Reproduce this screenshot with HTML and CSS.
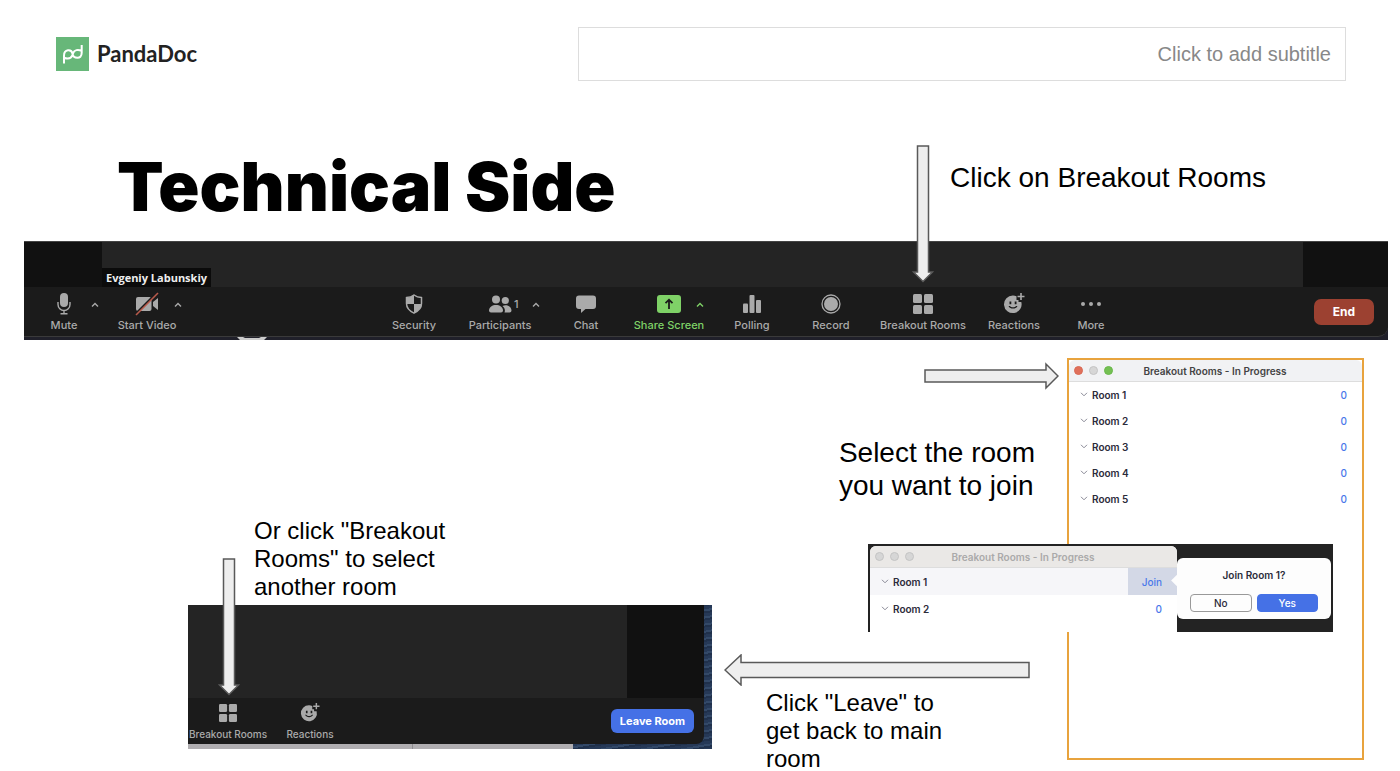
FILE: index.html
```html
<!DOCTYPE html>
<html lang="en">
<head>
    <meta charset="UTF-8">
    <meta name="viewport" content="width=device-width, initial-scale=1.0">
    <title>Technical Side</title>
    <link rel="stylesheet" href="styles.css">
</head>
<body>
    <!-- Shared icons -->
    <svg class="sprite" aria-hidden="true">
        <symbol id="grid" viewBox="0 0 20 20">
            <rect x="0" y="0" width="9" height="9" rx="1.5"/><rect x="11" y="0" width="9" height="9" rx="1.5"/>
            <rect x="0" y="11" width="9" height="9" rx="1.5"/><rect x="11" y="11" width="9" height="9" rx="1.5"/>
        </symbol>
        <symbol id="smile" viewBox="0 0 22 22">
            <path fill-rule="evenodd" d="M10 2.500a8.800 8.800 0 1 0 8.300 6.500h-2.800v-2h-2v-3.700a8.800 8.800 0 0 0-3.500-.8zM6.500 8.500h1.800v2.800h-1.800zM11.700 8.500h1.800v2.800h-1.800zM5.500 12.900h1.300c1.400 1.900 5 1.900 6.400 0h1.300c-1.500 3.600-7.500 3.600-9 0z"/>
            <path d="M17.200 0h1.600v2.700h2.700v1.600h-2.700v2.700h-1.600v-2.700h-2.700v-1.600h2.700z"/>
        </symbol>
        <symbol id="up" viewBox="0 0 8 5"><path d="M1 4.500l3-3 3 3" fill="none" stroke="currentColor" stroke-width="1.400"/></symbol>
        <symbol id="down" viewBox="0 0 8 5"><path d="M1 .8l3 3 3-3" fill="none" stroke="currentColor" stroke-width="1"/></symbol>
    </svg>

    <main class="slide">
        <header class="header">
            <div class="logo">
                <svg class="logo-mark" viewBox="0 0 33 34" aria-hidden="true">
                    <rect width="33" height="34" fill="#67b779"/>
                    <path d="M8 26.500v-7.700c0-7 7.500-6.800 8.500-2.200.7 5 9.200 6.500 9.200-.8V8M8 20.800c4 1.500 7.200.6 8.500-2.600l.6-1.900c1.200-3.600 5-4 8.400-2.500" fill="none" stroke="#fff" stroke-width="2"/>
                </svg>
                <span>PandaDoc</span>
            </div>
            <input class="subtitle" type="text" placeholder="Click to add subtitle" aria-label="Subtitle">
        </header>

        <div class="title-row">
            <h1>Technical Side</h1>
            <p class="note note-large">Click on Breakout Rooms</p>
        </div>

        <!-- Zoom toolbar -->
        <section class="meeting">
            <div class="video">
                <div class="video-edge"></div>
                <div class="video-main"><span class="name">Evgeniy Labunskiy</span></div>
                <div class="video-edge video-edge-right"></div>
            </div>
            <div class="toolbar">
                <div class="tools-left">
                    <button class="tool">
                        <span class="icon"><svg width="14" height="22" viewBox="0 0 14 22"><rect x="3" y="0" width="8" height="14" rx="4"/><path d="M1 9v2.500a6 6 0 0 0 12 0V9M7 17.500v3M3.500 20.700h7" fill="none" stroke="currentColor" stroke-width="1.400"/></svg></span>
                        Mute
                        <svg class="caret"><use href="#up"/></svg>
                    </button>
                    <button class="tool">
                        <span class="icon"><svg width="24" height="24" viewBox="0 0 24 24"><rect x="1" y="5" width="15.500" height="14" rx="2"/><path d="M18 10l5-4v12l-5-4z"/><path d="M.5 22L21.500 1" stroke="#1b1b1b" stroke-width="2"/><path d="M1 23L23 1" stroke="#b85a4b" stroke-width="1.600"/></svg></span>
                        Start Video
                        <svg class="caret"><use href="#up"/></svg>
                    </button>
                </div>
                <div class="tools">
                    <button class="tool">
                        <span class="icon"><svg width="18" height="20" viewBox="0 0 18 20"><path d="M9 1c2.300 1.700 4.600 2.400 7.500 2.600v6c0 4.500-3 7.500-7.500 9.500-4.500-2-7.500-5-7.500-9.500v-6C4.400 3.400 6.700 2.700 9 1z" fill="none" stroke="currentColor" stroke-width="1.500"/><path d="M9 1v9H1.500V4C4 3.500 7 2.700 9 1zM9 10h7.500c0 4-3 7-7.500 9z"/></svg></span>
                        Security
                    </button>
                    <button class="tool">
                        <span class="icon"><svg width="24" height="20" viewBox="0 0 24 20"><circle cx="8" cy="5.500" r="4"/><path d="M3 18.500a2 2 0 0 1-2-2c0-7.500 14-7.500 14 0a2 2 0 0 1-2 2z"/><circle cx="17.300" cy="6.500" r="3.600"/><path d="M14.500 12c4-2 9 .3 9 4.500a2 2 0 0 1-2 2h-5c1-2.500 0-5-2-6.500z"/></svg></span>
                        Participants
                        <span class="count">1</span>
                        <svg class="caret caret-wide"><use href="#up"/></svg>
                    </button>
                    <button class="tool">
                        <span class="icon"><svg width="20" height="20" viewBox="0 0 20 20"><path d="M3 1.500h14a3 3 0 0 1 3 3V12a3 3 0 0 1-3 3H9.500L5 19v-4H3a3 3 0 0 1-3-3V4.500a3 3 0 0 1 3-3z"/></svg></span>
                        Chat
                    </button>
                    <button class="tool share">
                        <span class="icon"><svg width="24" height="18" viewBox="0 0 24 18"><rect width="24" height="18" rx="3"/><path d="M12 14V5M8.500 8.200L12 4.700l3.500 3.500" fill="none" stroke="#1b1b1b" stroke-width="1.800"/></svg></span>
                        Share Screen
                        <svg class="caret"><use href="#up"/></svg>
                    </button>
                    <button class="tool">
                        <span class="icon"><svg width="18" height="20" viewBox="0 0 18 20"><rect x="0" y="9.500" width="5" height="9.500" rx="1"/><rect x="6.500" y="1" width="5" height="18" rx="1"/><rect x="13" y="6" width="5" height="13" rx="1"/></svg></span>
                        Polling
                    </button>
                    <button class="tool">
                        <span class="icon"><svg width="20" height="20" viewBox="0 0 20 20"><circle cx="10" cy="10" r="9" fill="none" stroke="currentColor" stroke-width="1.300"/><circle cx="10" cy="10" r="7"/></svg></span>
                        Record
                    </button>
                    <button class="tool">
                        <span class="icon"><svg width="20" height="20"><use href="#grid"/></svg></span>
                        Breakout Rooms
                        <svg class="arrow-down arrow-toolbar" width="22" height="138" viewBox="0 0 22 138"><path d="M5.500 1h11v126h4l-9.500 9.500L1.500 127h4z"/></svg>
                    </button>
                    <button class="tool">
                        <span class="icon"><svg width="22" height="22"><use href="#smile"/></svg></span>
                        Reactions
                    </button>
                    <button class="tool">
                        <span class="icon"><svg width="20" height="20" viewBox="0 0 20 20"><circle cx="2" cy="10" r="2"/><circle cx="10" cy="10" r="2"/><circle cx="18" cy="10" r="2"/></svg></span>
                        More
                    </button>
                </div>
                <button class="end">End</button>
            </div>
            <svg class="peek" viewBox="0 0 30 3" aria-hidden="true"><path d="M0 0h6l2 1h14l2-1h6l-3 3H3z"/></svg>
        </section>

        <div class="lower">
            <div class="col-left">
                <p class="note">Or click "Breakout<br>Rooms" to select<br>another room</p>
                <section class="leave">
                    <div class="leave-window">
                        <div class="leave-video"></div>
                        <div class="leave-bar">
                            <button class="tool">
                                <span class="icon"><svg width="18" height="18"><use href="#grid"/></svg></span>
                                Breakout Rooms
                            </button>
                            <button class="tool">
                                <span class="icon"><svg width="20" height="20"><use href="#smile"/></svg></span>
                                Reactions
                            </button>
                            <button class="leave-button">Leave Room</button>
                        </div>
                    </div>
                    <svg class="arrow-down arrow-leave" width="22" height="138" viewBox="0 0 22 138"><path d="M5.500 1h11v126h4l-9.500 9.500L1.500 127h4z"/></svg>
                </section>
            </div>

            <div class="col-middle">
                <svg class="arrow" width="136" height="28" viewBox="0 0 136 28"><path d="M2 8h121V2l12 12-12 12v-6H2z"/></svg>
                <p class="note note-large note-select">Select the room<br>you want to join</p>
                <svg class="arrow arrow-left" width="306" height="32" viewBox="0 0 306 32"><path d="M305 8.500H17V1L1 16l16 15v-7.500h288z"/></svg>
                <p class="note note-back">Click "Leave" to<br>get back to main<br>room</p>
            </div>

            <div class="col-right">
                <section class="rooms">
                    <div class="titlebar">
                        <span class="light red"></span><span class="light"></span><span class="light green"></span>
                        <h2>Breakout Rooms - In Progress</h2>
                    </div>
                    <table>
                        <tr><th><svg><use href="#down"/></svg>Room 1</th><td>0</td></tr>
                        <tr><th><svg><use href="#down"/></svg>Room 2</th><td>0</td></tr>
                        <tr><th><svg><use href="#down"/></svg>Room 3</th><td>0</td></tr>
                        <tr><th><svg><use href="#down"/></svg>Room 4</th><td>0</td></tr>
                        <tr><th><svg><use href="#down"/></svg>Room 5</th><td>0</td></tr>
                    </table>
                </section>

                <!-- Join dialog, lies over the rooms window -->
                <section class="join">
                    <div class="join-window">
                        <div class="titlebar">
                            <span class="light"></span><span class="light"></span><span class="light"></span>
                            <h2>Breakout Rooms - In Progress</h2>
                        </div>
                        <table>
                            <tr class="active"><th><svg><use href="#down"/></svg>Room 1</th><td><a href="#join">Join</a></td></tr>
                            <tr><th><svg><use href="#down"/></svg>Room 2</th><td>0</td></tr>
                        </table>
                    </div>
                    <div class="popover">
                        <strong>Join Room 1?</strong>
                        <div class="popover-buttons">
                            <button>No</button>
                            <button class="yes">Yes</button>
                        </div>
                    </div>
                </section>
            </div>
        </div>
    </main>
</body>
</html>
```

FILE: styles.css
```css
* {
    box-sizing: border-box;
}
body {
    margin: 0;
    background-color: #fff;
    color: #000;
    font-family: "Liberation Sans", Arial, sans-serif;
}
h1, h2, p {
    margin: 0;
}
button {
    margin: 0;
    padding: 0;
    border: none;
    background: none;
    font-family: Inter, sans-serif;
}
svg {
    fill: currentColor;
}
.sprite {
    display: none;
}
.slide {
    min-height: 100vh;
    overflow: hidden;
}

/* Header */
.header {
    display: flex;
    justify-content: space-between;
    align-items: center;
    padding: 27px 54px 0 56px;
}
.logo {
    display: flex;
    align-items: center;
    gap: 8px;
    color: #222;
    font-family: Lato, sans-serif;
    font-size: 22px;
    font-weight: bold;
    line-height: 24px;
}
.logo-mark {
    width: 33px;
    height: 34px;
}
.subtitle {
    width: 59.5%;
    height: 54px;
    padding: 0 14px;
    border: 1px solid #ddd;
    background-color: #fff;
    font-family: "Liberation Sans", Arial, sans-serif;
    font-size: 20px;
    text-align: right;
}
.subtitle::placeholder {
    color: #888;
}

.title-row {
    display: flex;
    justify-content: space-between;
    align-items: flex-start;
    height: 160px;
    padding: 58px 134px 0 117px;
}
h1 {
    font-family: Inter, sans-serif;
    font-size: 68px;
    font-weight: 900;
    line-height: 94px;
}
.note {
    font-size: 24px;
    line-height: 28px;
}
.note-large {
    font-size: 28px;
    line-height: 33px;
}
.title-row .note {
    padding-top: 22px;
}

/* Meeting window with toolbar */
.meeting {
    position: relative;
    margin: 0 12px 0 24px;
    padding-bottom: 3px;
    border-top: 1px solid #444;
    background-color: #20202a;
}
.video {
    display: flex;
    height: 45px;
    background-color: #242424;
}
.video-edge {
    width: 78px;
    background-color: #111;
}
.video-edge-right {
    width: 85px;
}
.video-main {
    display: flex;
    flex: 1;
    align-items: flex-end;
}
.name {
    padding: 0 4px;
    background-color: #0b0b0b;
    color: #eee;
    font-family: "Open Sans", sans-serif;
    font-size: 11px;
    font-weight: bold;
    line-height: 19px;
}
.toolbar {
    display: flex;
    justify-content: space-between;
    align-items: center;
    height: 50px;
    padding-right: 14px;
    border-bottom: 1px solid #3a3a3a;
    border-bottom-right-radius: 10px;
    background-color: #1b1b1b;
}
.tools-left {
    display: grid;
    grid-template-columns: 80px 86px;
}
.tools {
    display: grid;
    grid-template-columns: 86px 86px 86px 80px 86px 72px 112px 70px 84px;
}
.tool {
    position: relative;
    color: #aaa;
    font-size: 11px;
    font-weight: 500;
    line-height: 16px;
    white-space: nowrap;
}
.icon {
    display: flex;
    justify-content: center;
    align-items: center;
    height: 26px;
}
.caret {
    position: absolute;
    top: 11px;
    left: calc(50% + 27px);
    width: 8px;
    height: 5px;
}
.caret-wide {
    left: calc(50% + 32px);
}
.count {
    position: absolute;
    top: 5px;
    left: calc(50% + 14px);
}
.share {
    color: #7fd267;
}
.end {
    width: 60px;
    height: 26px;
    border-radius: 7px;
    background-color: #9c4131;
    color: #fff;
    font-size: 12px;
    font-weight: bold;
}
/* Bit of the desktop that shows under the window */
.peek {
    position: absolute;
    bottom: 0;
    left: 213px;
    width: 30px;
    height: 3px;
    color: #ccc;
}

/* Arrows */
.arrow, .arrow-down {
    fill: #eee;
    stroke: #595959;
    stroke-width: 1.5;
}
.arrow-down {
    position: absolute;
    z-index: 1;
}
.arrow-toolbar {
    bottom: 50px;
    left: calc(50% - 11px);
}

/* Lower part */
.lower {
    display: grid;
    grid-template-columns: minmax(0, 524fr) minmax(0, 355fr) minmax(0, 297fr);
    padding: 18px 36px 0 188px;
}
.col-left {
    padding-top: 159px;
}
.col-left .note {
    padding-left: 66px;
}
.leave {
    position: relative;
    height: 144px;
    margin-top: 4px;
    padding: 0 8px 5px 0;
    background: linear-gradient(90deg, #b0aeb1 224px, #8f8d90 224px 225px, #b0aeb1 225px) left bottom / 385px 5px no-repeat, repeating-linear-gradient(170deg, #263957 0 3px, #334968 3px 5px, #20314c 5px 7px);
}
.leave-window {
    overflow: hidden;
    border-bottom-right-radius: 8px;
    background-color: #1b1b1b;
}
.leave-video {
    height: 93px;
    border-right: 77px solid #111;
    background-color: #242424;
}
.leave-bar {
    display: flex;
    align-items: center;
    height: 46px;
    padding-right: 10px;
}
.leave-bar .tool {
    width: 84px;
    margin-left: -2px;
    font-size: 10px;
}
.leave-button {
    width: 83px;
    height: 24px;
    margin-left: auto;
    border-radius: 6px;
    background-color: #4571e6;
    color: #fff;
    font-size: 11px;
    font-weight: bold;
}
.arrow-leave {
    bottom: 53px;
    left: 30px;
}

.col-middle {
    display: flex;
    flex-direction: column;
    align-items: flex-end;
    padding-top: 4px;
}
.arrow {
    margin-right: 8px;
}
.note-select {
    padding: 46px 32px 0 0;
}
.arrow-left {
    margin: 152px 37px 0 0;
}
.note-back {
    align-self: flex-start;
    padding: 3px 0 0 54px;
}

/* Breakout rooms window */
.col-right {
    position: relative;
    font-family: Inter, sans-serif;
}
.rooms {
    height: 402px;
    border: 2px solid #e8a33d;
}
.titlebar {
    display: flex;
    align-items: center;
    gap: 6px;
    height: 22px;
    padding: 0 5px;
    border-bottom: 1px solid #ddd;
    border-radius: 6px 6px 0 0;
    background-color: #f1f2f4;
}
.titlebar h2 {
    flex: 1;
    padding-right: 46px;
    color: #444;
    font-size: 10px;
    font-weight: 600;
    text-align: center;
    white-space: nowrap;
}
.light {
    width: 9px;
    height: 9px;
    border: 1px solid #c4c4c4;
    border-radius: 50%;
    background-color: #d6d6d6;
}
.light.red {
    border-color: #d96a55;
    background-color: #e0705b;
}
.light.green {
    border-color: #69b84a;
    background-color: #74c053;
}
table {
    width: 100%;
    border-collapse: collapse;
    font-size: 10px;
}
th, td {
    height: 26px;
    padding: 0;
    text-align: left;
}
th {
    color: #2b2b3a;
    font-weight: 600;
}
th svg {
    width: 8px;
    height: 5px;
    margin: 0 4px 2px 11px;
    color: #8a8a96;
}
td {
    padding-right: 15px;
    color: #4a78ea;
    font-weight: 500;
    text-align: right;
}

/* Join dialog */
.join {
    position: absolute;
    top: 186px;
    right: 31px;
    display: flex;
    align-items: flex-start;
    width: 465px;
    height: 88px;
    padding: 2px 2px 0 2px;
    background-color: #232323;
}
.join-window {
    width: 307px;
    height: 86px;
    border-radius: 6px 6px 0 0;
    background-color: #fff;
}
.join .titlebar {
    background-color: #eae8e6;
}
.join .titlebar h2 {
    color: #aaa;
}
.join th, .join td {
    height: 27px;
}
.join td {
    width: 49px;
}
.join .active {
    background-color: #f6f6f9;
}
.join .active td {
    background-color: #d3d8e6;
}
.join a {
    color: #4a78ea;
    text-decoration: none;
}
.popover {
    position: relative;
    flex: 1;
    height: 61px;
    margin-top: 12px;
    padding: 10px 13px 0 13px;
    border-radius: 6px;
    background-color: #fdfdfd;
    color: #2b2b3a;
    font-size: 10px;
    line-height: 14px;
    text-align: center;
}
.popover strong {
    font-weight: 600;
}
.popover::before {
    content: "";
    position: absolute;
    top: 18px;
    left: -4px;
    width: 9px;
    height: 9px;
    background-color: #fdfdfd;
    transform: rotate(45deg);
}
.popover-buttons {
    display: flex;
    gap: 5px;
    margin-top: 12px;
}
.popover button {
    flex: 1;
    height: 18px;
    border: 1px solid #999;
    border-radius: 4px;
    color: #2b2b3a;
    font-size: 10px;
    font-weight: 500;
}
.popover .yes {
    border-color: #4571e6;
    background-color: #4571e6;
    color: #fff;
}
```
